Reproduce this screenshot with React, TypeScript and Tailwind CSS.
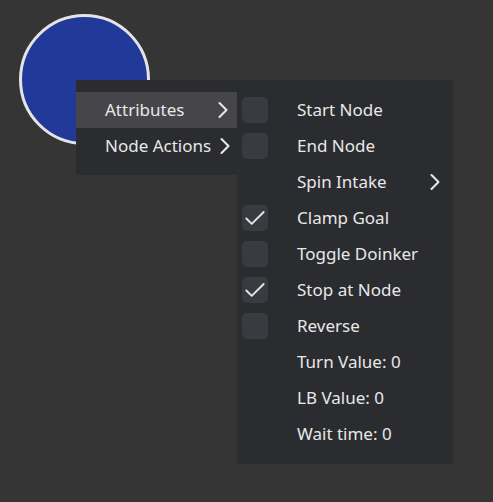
import { Check, ChevronRight } from "lucide-react";

type SubItem = {
  label: string;
  kind: "check" | "submenu" | "value";
  checked?: boolean;
};

const subItems: SubItem[] = [
  { label: "Start Node", kind: "check" },
  { label: "End Node", kind: "check" },
  { label: "Spin Intake", kind: "submenu" },
  { label: "Clamp Goal", kind: "check", checked: true },
  { label: "Toggle Doinker", kind: "check" },
  { label: "Stop at Node", kind: "check", checked: true },
  { label: "Reverse", kind: "check" },
  { label: "Turn Value: 0", kind: "value" },
  { label: "LB Value: 0", kind: "value" },
  { label: "Wait time: 0", kind: "value" },
];

function Chevron() {
  return <ChevronRight size={28} strokeWidth={1.8} className="shrink-0" />;
}

function SubMenu() {
  return (
    <div className="w-[216px] bg-[#2b2c30] py-3">
      {subItems.map((item) => (
        <div key={item.label} className="flex h-9 items-center pl-[5px] pr-1">
          <span
            className={
              item.kind === "check"
                ? "flex h-[26px] w-[26px] shrink-0 items-center justify-center rounded-[5px] bg-[#3a3b40]"
                : "h-[26px] w-[26px] shrink-0"
            }
          >
            {item.checked && <Check size={27} strokeWidth={1.7} />}
          </span>
          <span className="ml-[29px] flex-1">{item.label}</span>
          {item.kind === "submenu" && <Chevron />}
        </div>
      ))}
    </div>
  );
}

export default function App() {
  return (
    <div
      className="relative h-[502px] w-[493px] overflow-hidden bg-[#353535] text-[17px] text-[#e8e8e8]"
      style={{ fontFamily: '"Noto Sans", "Open Sans", sans-serif' }}
    >
      <div className="absolute left-[19px] top-[14px] h-[131px] w-[131px] rounded-full border-[3px] border-[#e4e4e6] bg-[#213a99]" />

      <div className="absolute left-[76px] top-[80px] flex items-start">
        <div className="w-[161px] bg-[#2b2c30] pb-[11px] pt-3">
          <div className="flex h-9 items-center bg-[#45454a] pl-[29px]">
            <span className="flex-1">Attributes</span>
            <Chevron />
          </div>
          <div className="flex h-9 items-center pl-[29px]">
            <span className="flex-1 whitespace-nowrap">Node Actions</span>
            <Chevron />
          </div>
        </div>
        <SubMenu />
      </div>
    </div>
  );
}
